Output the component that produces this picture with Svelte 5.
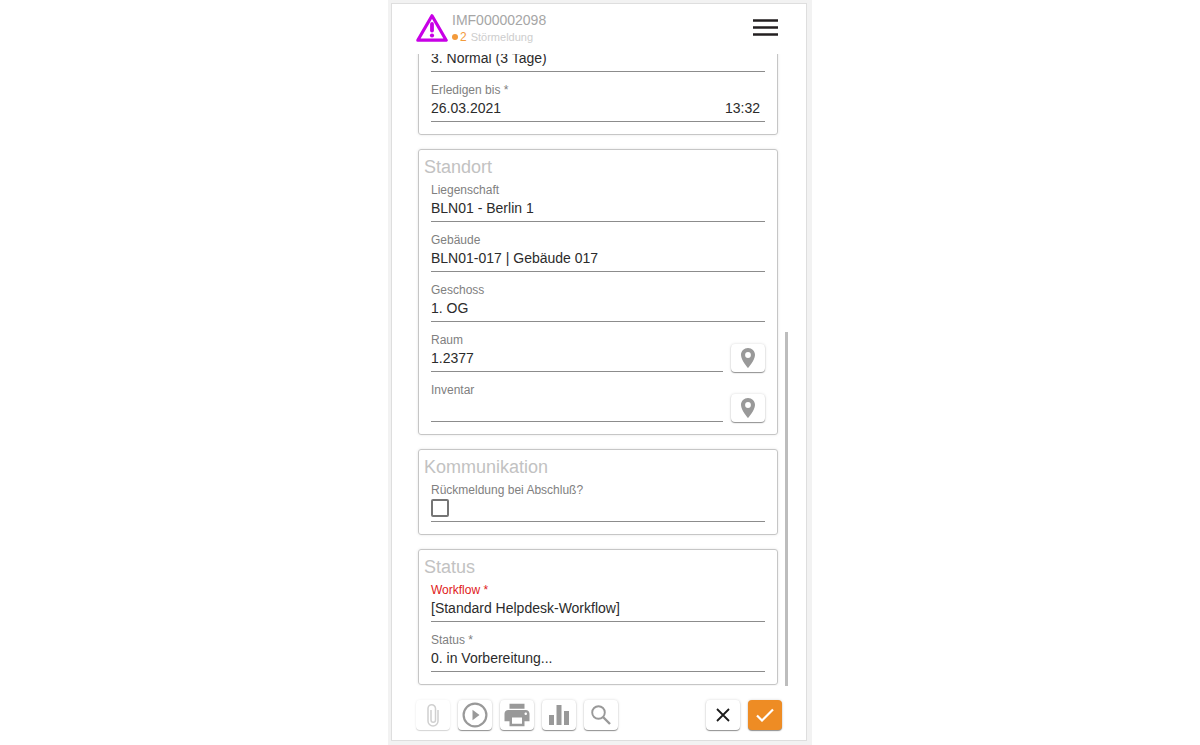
<script>
  let priority = $state('3. Normal (3 Tage)');
  let dueDate = $state('26.03.2021');
  let dueTime = $state('13:32');
  let feedback = $state(false);

  let location = $state([
    { id: 'site', label: 'Liegenschaft', value: 'BLN01 - Berlin 1' },
    { id: 'building', label: 'Gebäude', value: 'BLN01-017 | Gebäude 017' },
    { id: 'floor', label: 'Geschoss', value: '1. OG' },
    { id: 'room', label: 'Raum', value: '1.2377', pin: true },
    { id: 'inventory', label: 'Inventar', value: '', pin: true }
  ]);

  let status = $state([
    { id: 'workflow', label: 'Workflow *', value: '[Standard Helpdesk-Workflow]', alert: true },
    { id: 'state', label: 'Status *', value: '0. in Vorbereitung...' }
  ]);
</script>

{#snippet field(item)}
  <div class="row">
    <div class="field">
      <label for={item.id} class:alert={item.alert}>{item.label}</label>
      <input id={item.id} type="text" bind:value={item.value} />
    </div>
    {#if item.pin}
      <button class="btn pin" type="button" aria-label="{item.label} auf Karte">
        <svg width="24" height="24" viewBox="0 0 24 24"><path fill="currentColor" d="M12 2C8.130 2 5 5.130 5 9c0 5.250 7 13 7 13s7-7.750 7-13c0-3.870-3.130-7-7-7zm0 9.900a2.900 2.900 0 1 1 0-5.800 2.900 2.900 0 0 1 0 5.800z" /></svg>
      </button>
    {/if}
  </div>
{/snippet}

<div class="stage">
  <main class="panel">
    <header>
      <svg class="warn" width="32" height="30" viewBox="0 0 32 30" aria-hidden="true">
        <path d="M16 2.800 30.200 27.200H1.800Z" fill="none" stroke="#c800e6" stroke-width="3.200" stroke-linejoin="round" />
        <path d="M16 11v6.500" stroke="#c800e6" stroke-width="3.800" stroke-linecap="round" />
        <circle cx="16" cy="22.500" r="2.100" fill="#c800e6" />
      </svg>
      <div class="heading">
        <h1>IMF000002098</h1>
        <p><span class="dot"></span><span class="count">2</span><span>Störmeldung</span></p>
      </div>
      <button class="menu" type="button" aria-label="Menü">
        <svg width="25" height="18" viewBox="0 0 25 18"><path d="M0 2.500h25M0 9.500h25M0 16.500h25" stroke="#231f20" stroke-width="2.600" /></svg>
      </button>
    </header>

    <div class="body">
      <div class="scroll">
        <div class="cards">
          <section class="card">
            <div class="field">
              <input type="text" aria-label="Priorität" bind:value={priority} />
            </div>
            <div class="field">
              <label for="due">Erledigen bis *</label>
              <div class="pair">
                <input id="due" type="text" bind:value={dueDate} />
                <input class="time" type="text" aria-label="Uhrzeit" bind:value={dueTime} />
              </div>
            </div>
          </section>

          <section class="card">
            <h2>Standort</h2>
            {#each location as item (item.id)}
              {@render field(item)}
            {/each}
          </section>

          <section class="card">
            <h2>Kommunikation</h2>
            <div class="field">
              <label for="feedback">Rückmeldung bei Abschluß?</label>
              <div class="check"><input id="feedback" type="checkbox" bind:checked={feedback} /></div>
            </div>
          </section>

          <section class="card">
            <h2>Status</h2>
            {#each status as item (item.id)}
              {@render field(item)}
            {/each}
          </section>
        </div>
      </div>
      <div class="thumb" aria-hidden="true"></div>
    </div>

    <footer>
      <button class="btn" type="button" aria-label="Anhang" disabled>
        <svg width="12" height="23" viewBox="0 0 12 23"><path d="M11 6v11a5 5 0 0 1-10 0V4.500a3.500 3.500 0 0 1 7.500 0V16a2.200 2.200 0 0 1-4.500 0V6" fill="none" stroke="currentColor" stroke-width="1.500" /></svg>
      </button>
      <button class="btn" type="button" aria-label="Starten">
        <svg width="26" height="26" viewBox="0 0 26 26"><circle cx="13" cy="13" r="11.400" fill="none" stroke="currentColor" stroke-width="2.200" /><path fill="currentColor" d="M10.500 7.800v10.400l7-5.200z" /></svg>
      </button>
      <button class="btn" type="button" aria-label="Drucken">
        <svg width="30" height="30" viewBox="0 0 24 24"><path fill="currentColor" d="M19 8H5c-1.660 0-3 1.340-3 3v6h4v4h12v-4h4v-6c0-1.660-1.340-3-3-3zm-3 11H8v-5h8v5zm3-7c-.55 0-1-.45-1-1s.45-1 1-1 1 .45 1 1-.45 1-1 1zm-1-9H6v4h12V3z" /></svg>
      </button>
      <button class="btn" type="button" aria-label="Statistik">
        <svg width="20" height="20" viewBox="0 0 20 20"><path fill="currentColor" d="M0 10h5v10H0zM7.500 0h5v20h-5zM15 6h5v14h-5z" /></svg>
      </button>
      <button class="btn" type="button" aria-label="Suchen">
        <svg width="20" height="20" viewBox="0 0 20 20"><path d="M12 12l7 7" stroke="currentColor" stroke-width="2.400" /><circle cx="7.500" cy="7.500" r="6.300" fill="none" stroke="currentColor" stroke-width="1.900" /></svg>
      </button>
      <span class="spacer"></span>
      <button class="btn dark" type="button" aria-label="Abbrechen">
        <svg width="14" height="14" viewBox="0 0 14 14"><path d="M1 1l12 12M13 1L1 13" stroke="currentColor" stroke-width="1.800" /></svg>
      </button>
      <button class="btn primary" type="button" aria-label="Speichern">
        <svg width="18" height="14" viewBox="0 0 18 14"><path d="M1 7.500l5 5L17 1.500" fill="none" stroke="currentColor" stroke-width="2.200" /></svg>
      </button>
    </footer>
  </main>
</div>

<style>
  :global(body) {
    margin: 0;
    background: #fff;
    font-family: "Liberation Sans", Arial, sans-serif;
  }

  .stage {
    box-sizing: border-box;
    max-width: 424px;
    height: 100vh;
    margin: 0 auto;
    padding: 3px 5px 4px 3px;
    background: #f2f2f2;
  }

  .panel {
    box-sizing: border-box;
    height: 100%;
    display: flex;
    flex-direction: column;
    padding: 0 24px;
    background: #fff;
    border: 1px solid #dedede;
  }

  header {
    flex: none;
    display: flex;
    align-items: flex-start;
    gap: 4px;
    height: 50px;
    box-sizing: border-box;
    padding: 8px 4px 0 0;
  }

  .warn {
    flex: none;
    margin-top: 1px;
  }

  .heading {
    flex: 1;
  }

  h1,
  h2,
  p {
    margin: 0;
    font-weight: 400;
  }

  h1 {
    font-size: 14px;
    line-height: 16px;
    color: #a6a6a6;
  }

  p {
    display: flex;
    align-items: center;
    font-size: 11px;
    line-height: 18px;
    color: #cdcdcd;
  }

  .dot {
    width: 6px;
    height: 6px;
    margin-right: 2px;
    border-radius: 50%;
    background: #f39a3b;
  }

  .count {
    margin-right: 4px;
    font-size: 12px;
    color: #f39a3b;
  }

  .menu {
    margin-top: 6px;
    padding: 0;
    border: 0;
    background: none;
    line-height: 0;
  }

  .body {
    position: relative;
    flex: 1;
    min-height: 0;
    display: flex;
  }

  /* column-reverse keeps the list scrolled to its end */
  .scroll {
    flex: 1;
    min-width: 0;
    display: flex;
    flex-direction: column-reverse;
    overflow-y: auto;
    scrollbar-width: none;
  }

  .cards {
    display: flex;
    flex-direction: column;
    gap: 14px;
    padding: 0 4px 1px 2px;
  }

  .thumb {
    position: absolute;
    right: -6px;
    bottom: 0;
    width: 3px;
    height: 56%;
    background: #bdbdbd;
  }

  .card {
    display: flex;
    flex-direction: column;
    gap: 10px;
    padding: 7px 12px 12px;
    border: 1px solid #c6c6c6;
    border-radius: 3px;
    box-shadow: 0 0 3px rgba(0, 0, 0, 0.1);
  }

  h2 {
    margin: 0 -7px -5px;
    font-size: 18px;
    line-height: 20px;
    color: #c2c2c2;
  }

  .row {
    display: flex;
    align-items: flex-end;
    gap: 8px;
  }

  .field {
    flex: 1;
    min-width: 0;
    display: flex;
    flex-direction: column;
    padding-bottom: 3px;
    border-bottom: 1px solid #8c8c8c;
  }

  label {
    font-size: 12px;
    line-height: 16px;
    color: #808080;
  }

  label.alert {
    color: #e02020;
  }

  input[type="text"] {
    width: 100%;
    min-width: 0;
    height: 20px;
    padding: 0;
    border: 0;
    outline: 0;
    background: none;
    font: inherit;
    font-size: 14px;
    line-height: 20px;
    color: #2b2b2b;
  }

  .pair {
    display: flex;
    padding-right: 5px;
  }

  .pair .time {
    text-align: right;
  }

  .check {
    display: flex;
    align-items: center;
    height: 20px;
  }

  input[type="checkbox"] {
    appearance: none;
    box-sizing: border-box;
    width: 18px;
    height: 18px;
    margin: 0;
    border: 2px solid #757575;
    border-radius: 2px;
    background: #fff;
  }

  input[type="checkbox"]:checked {
    background: #757575;
  }

  .btn {
    flex: none;
    display: flex;
    align-items: center;
    justify-content: center;
    width: 34px;
    height: 30px;
    padding: 0;
    border: 0;
    border-radius: 4px;
    background: #fff;
    color: #999;
    box-shadow: 0 1px 1px rgba(0, 0, 0, 0.4), 0 0 3px rgba(0, 0, 0, 0.15);
  }

  .btn.pin {
    height: 28px;
  }

  .btn:disabled {
    color: #d0d0d0;
    box-shadow: 0 1px 1px rgba(0, 0, 0, 0.15), 0 0 3px rgba(0, 0, 0, 0.06);
  }

  .btn.dark {
    color: #1c1c1c;
  }

  .btn.primary {
    background: #ee8c24;
    color: #fff;
  }

  footer {
    flex: none;
    display: flex;
    gap: 8px;
    padding: 14px 0 10px;
  }

  .spacer {
    flex: 1;
  }
</style>
